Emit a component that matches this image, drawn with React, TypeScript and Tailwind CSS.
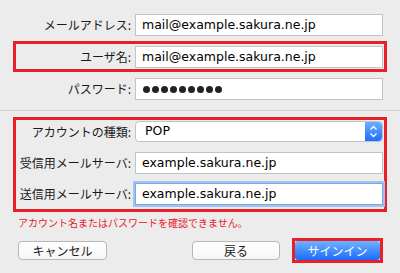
import type { ReactNode } from "react";

const JP = "font-['Noto_Sans_CJK_JP',sans-serif]";
const FIELD = "font-['DejaVu_Sans','Noto_Sans_CJK_JP',sans-serif]";

function Label({ children, w }: { children: ReactNode; w: string }) {
  return (
    <span className={`${w} shrink-0 text-right text-[12px] leading-none text-[#1a1a1a] ${JP}`}>
      {children}
    </span>
  );
}

function Field({ value, focused }: { value: string; focused?: boolean }) {
  return (
    <div
      className={`ml-[4px] flex h-[22px] w-[248px] items-center border bg-white pl-[6px] text-[12.5px] text-black ${FIELD} ${
        focused
          ? "border-[#7aa7e6] shadow-[0_0_0_2px_#9fc3f2]"
          : "border-[#c3c3c3]"
      }`}
    >
      {value}
    </div>
  );
}

function Stepper() {
  return (
    <div className="flex h-full w-[17px] items-center justify-center rounded-r-[4px] bg-gradient-to-b from-[#6aaeff] to-[#1e6dfc]">
      <svg width="9" height="13" viewBox="0 0 9 13" fill="none" stroke="white" strokeWidth="1.4">
        <path d="M1.5 4.5 L4.5 1.5 L7.5 4.5" />
        <path d="M1.5 8.5 L4.5 11.5 L7.5 8.5" />
      </svg>
    </div>
  );
}

export default function App() {
  return (
    <div className="flex h-[273px] w-[400px] flex-col bg-[#ececec] pt-[14px]">
      <div className="flex items-center">
        <Label w="w-[131px]">メールアドレス:</Label>
        <Field value="mail@example.sakura.ne.jp" />
      </div>

      <div className="mx-[13px] mt-[5px] border-[3px] border-[#e8202a] pb-[1px] pt-[2px]">
        <div className="flex items-center">
          <Label w="w-[115px]">ユーザ名:</Label>
          <Field value="mail@example.sakura.ne.jp" />
        </div>
      </div>

      <div className="mt-[6px] flex items-center">
        <Label w="w-[131px]">パスワード:</Label>
        <div className="ml-[4px] flex h-[22px] w-[248px] items-center gap-[2px] border border-[#c3c3c3] bg-white pl-[7px]">
          {Array.from({ length: 9 }).map((_, i) => (
            <span key={i} className="h-[7px] w-[7px] rounded-full bg-[#222]" />
          ))}
        </div>
      </div>

      <div className="mt-[10px] h-px bg-[#cfcfcf]" />

      <div className="mx-[13px] mt-[6px] flex flex-col border-[3px] border-[#e8202a] pb-[4px] pt-[1px]">
        <div className="flex items-center">
          <Label w="w-[115px]">アカウントの種類:</Label>
          <div className="ml-[4px] flex h-[21px] w-[248px] items-center justify-between rounded-[4px] border border-[#c3c3c3] bg-white">
            <span className={`pl-[9px] text-[12.5px] text-black ${FIELD}`}>POP</span>
            <Stepper />
          </div>
        </div>
        <div className="mt-[10px] flex items-center">
          <Label w="w-[115px]">受信用メールサーバ:</Label>
          <Field value="example.sakura.ne.jp" />
        </div>
        <div className="mt-[9px] flex items-center">
          <Label w="w-[115px]">送信用メールサーバ:</Label>
          <Field value="example.sakura.ne.jp" focused />
        </div>
      </div>

      <p className={`ml-[18px] mt-[6px] text-[10px] leading-none text-[#e8202a] ${JP}`}>
        アカウント名またはパスワードを確認できません。
      </p>

      <div className="mt-[10px] flex items-center">
        <button
          className={`ml-[18px] h-[19px] w-[89px] rounded-[4px] border border-[#b8b8b8] bg-gradient-to-b from-white to-[#f6f6f6] text-[12px] leading-none text-[#1a1a1a] ${JP}`}
        >
          キャンセル
        </button>
        <button
          className={`ml-[85px] h-[19px] w-[88px] rounded-[4px] border border-[#b8b8b8] bg-gradient-to-b from-white to-[#f6f6f6] text-[12px] leading-none text-[#1a1a1a] ${JP}`}
        >
          戻る
        </button>
        <div className="ml-[12px] border-[3px] border-[#e8202a]">
          <button
            className={`block h-[19px] w-[85px] rounded-[3px] bg-gradient-to-b from-[#6fb1ff] to-[#1c69fb] text-[12px] leading-none text-white ${JP}`}
          >
            サインイン
          </button>
        </div>
      </div>
    </div>
  );
}
